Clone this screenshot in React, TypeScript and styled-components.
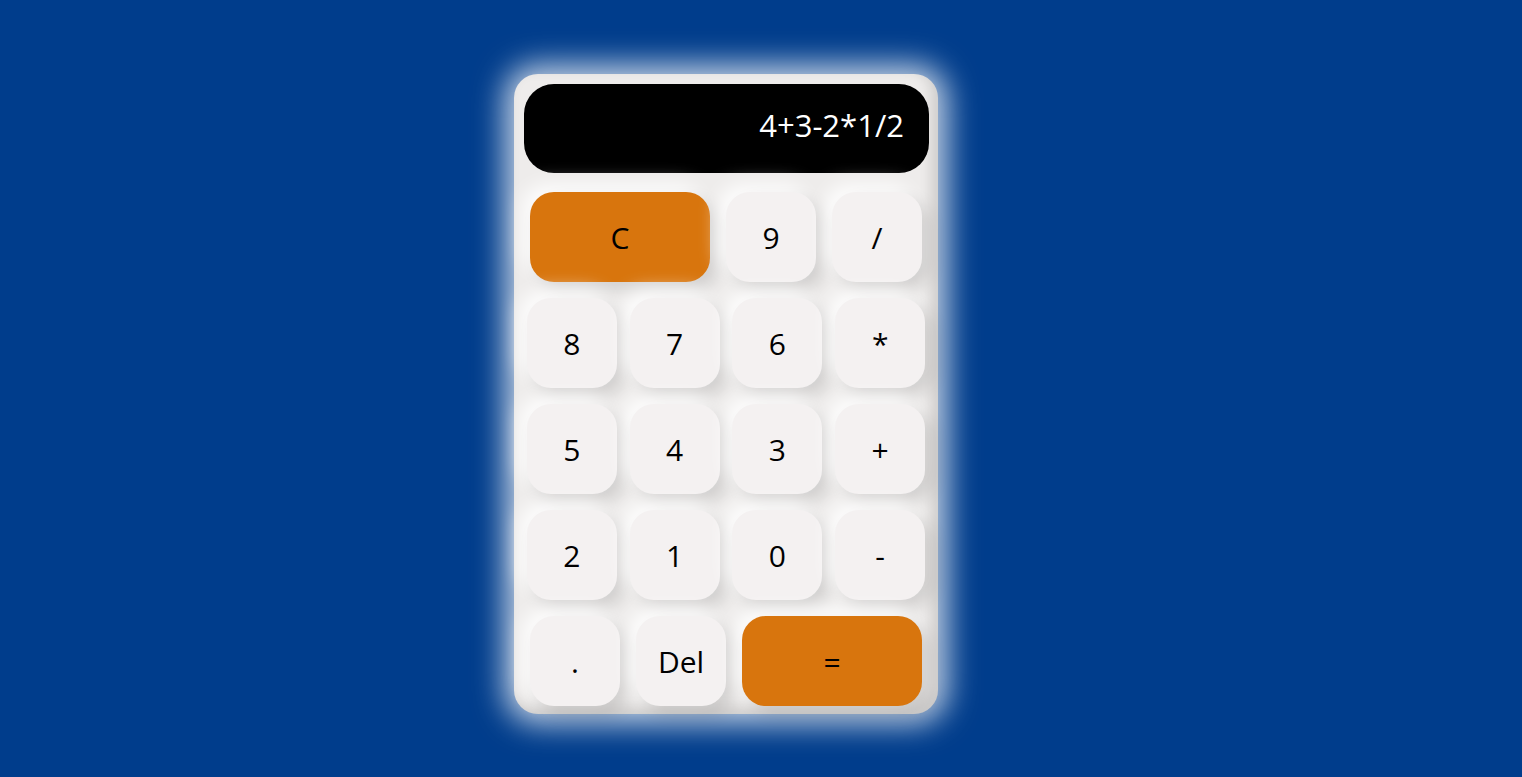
import React from 'react';
import styled, { createGlobalStyle } from 'styled-components';

const GlobalStyle = createGlobalStyle`
  html, body {
    margin: 0;
    padding: 0;
    background: #003d8c;
    font-family: 'Segoe UI', 'Open Sans', sans-serif;
  }
`;

const Page = styled.div`
  min-height: 777px;
  box-sizing: border-box;
  padding: 74px 0 0 514px;
`;

const Body = styled.div`
  width: 424px;
  height: 640px;
  box-sizing: border-box;
  padding: 10px 9px 8px 10px;
  border-radius: 24px;
  background: #eeeceb;
  box-shadow: 0 0 30px 10px rgba(255, 255, 255, 0.75),
    inset -6px -6px 14px rgba(0, 0, 0, 0.14);
  display: flex;
  flex-direction: column;
`;

const Display = styled.div`
  height: 89px;
  border-radius: 30px;
  background: #000;
  color: #fff;
  font-size: 31px;
  display: flex;
  align-items: center;
  justify-content: flex-end;
  padding: 0 25px 8px 0;
`;

const Keys = styled.div`
  margin: 19px -9px 0 -10px;
  display: flex;
  flex-direction: column;
  gap: 16px;
`;

const Row = styled.div`
  display: flex;
  justify-content: space-evenly;
`;

const Key = styled.button<{ $wide?: boolean; $accent?: boolean }>`
  width: ${(p) => (p.$wide ? '180px' : '90px')};
  height: 90px;
  border: none;
  border-radius: 24px;
  padding: 0;
  font-family: inherit;
  font-size: 30px;
  color: #000;
  background: ${(p) => (p.$accent ? '#d8750d' : '#f4f1f1')};
  box-shadow: 8px 8px 16px rgba(0, 0, 0, 0.12),
    -8px -8px 18px rgba(255, 255, 255, 0.85);
  cursor: pointer;
`;

const rows: { label: string; wide?: boolean; accent?: boolean }[][] = [
  [{ label: 'C', wide: true, accent: true }, { label: '9' }, { label: '/' }],
  [{ label: '8' }, { label: '7' }, { label: '6' }, { label: '*' }],
  [{ label: '5' }, { label: '4' }, { label: '3' }, { label: '+' }],
  [{ label: '2' }, { label: '1' }, { label: '0' }, { label: '-' }],
  [{ label: '.' }, { label: 'Del' }, { label: '=', wide: true, accent: true }],
];

const App: React.FC = () => (
  <>
    <GlobalStyle />
    <Page>
      <Body>
        <Display>4+3-2*1/2</Display>
        <Keys>
          {rows.map((row, i) => (
            <Row key={i}>
              {row.map((k) => (
                <Key key={k.label} $wide={k.wide} $accent={k.accent}>
                  {k.label}
                </Key>
              ))}
            </Row>
          ))}
        </Keys>
      </Body>
    </Page>
  </>
);

export default App;
